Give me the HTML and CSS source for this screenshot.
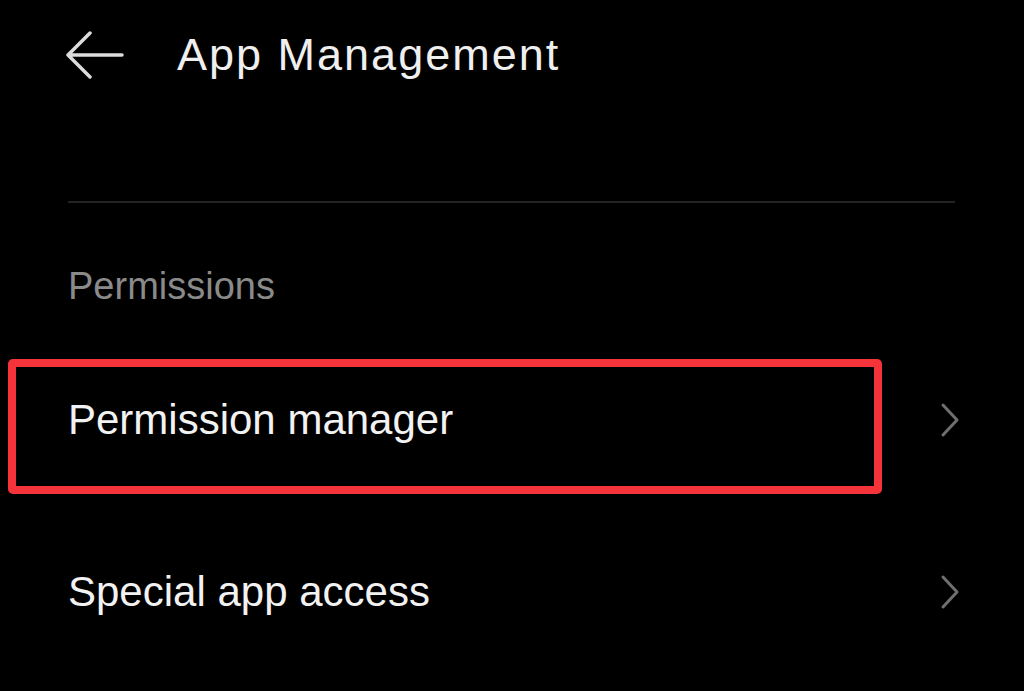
FILE: index.html
```html
<!DOCTYPE html>
<html lang="en">
<head>
  <meta charset="UTF-8" />
  <meta name="viewport" content="width=device-width, initial-scale=1.0"/>
  <title>App Management</title>
  <link rel="stylesheet" href="styles.css">
</head>
<body>
  <header class="topbar">
    <svg class="back" width="58" height="50" viewBox="0 0 58 50" aria-hidden="true">
      <path d="M2 25 H56 M24 3 L2 25 L24 47" fill="none" stroke="#dcdcdc" stroke-width="3.5" stroke-linecap="round" stroke-linejoin="round"/>
    </svg>
    <h1>App Management</h1>
  </header>

  <div class="divider"></div>

  <!-- Permissions group -->
  <section class="group">
    <h2 class="group-label">Permissions</h2>
    <div class="row">
      <span class="row-title">Permission manager</span>
      <svg class="chevron" width="20" height="36" viewBox="0 0 20 36" aria-hidden="true">
        <path d="M3 3 L17 18 L3 33" fill="none" stroke="#6f6f6f" stroke-width="3" stroke-linecap="round" stroke-linejoin="round"/>
      </svg>
      <div class="highlight"></div>
    </div>
    <div class="row">
      <span class="row-title">Special app access</span>
      <svg class="chevron" width="20" height="36" viewBox="0 0 20 36" aria-hidden="true">
        <path d="M3 3 L17 18 L3 33" fill="none" stroke="#6f6f6f" stroke-width="3" stroke-linecap="round" stroke-linejoin="round"/>
      </svg>
    </div>
  </section>
</body>
</html>
```

FILE: styles.css
```css
body {
  margin: 0;
  background: #000;
  color: #f0f0f0;
  font-family: "Liberation Sans", Arial, sans-serif;
  overflow: hidden;
}
.topbar {
  height: 110px;
  display: flex;
  align-items: center;
  padding-left: 66px;
  gap: 53px;
}
.topbar h1 {
  margin: 0;
  font-size: 45px;
  font-weight: 400;
  letter-spacing: 2px;
  line-height: 50px;
  color: #efefef;
}
.divider {
  height: 2px;
  background: #232323;
  margin: 91px 69px 0 68px;
}
.group {
  margin: 0 66px 0 68px;
}
.group-label {
  margin: 60px 0 0;
  font-size: 38px;
  font-weight: 400;
  line-height: 46px;
  color: #8a8a8a;
}
.row {
  position: relative;
  height: 172px;
  display: flex;
  align-items: center;
  justify-content: space-between;
}
.group-label + .row {
  margin-top: 25px;
}
.row-title {
  font-size: 42px;
  line-height: 50px;
  color: #f2f2f2;
}
.chevron {
  margin-right: -2px;
}
/* red annotation box drawn over the first row */
.highlight {
  position: absolute;
  left: -60px;
  top: 25px;
  width: 858px;
  height: 119px;
  border: 8px solid #f5333a;
  border-radius: 5px;
}
```
